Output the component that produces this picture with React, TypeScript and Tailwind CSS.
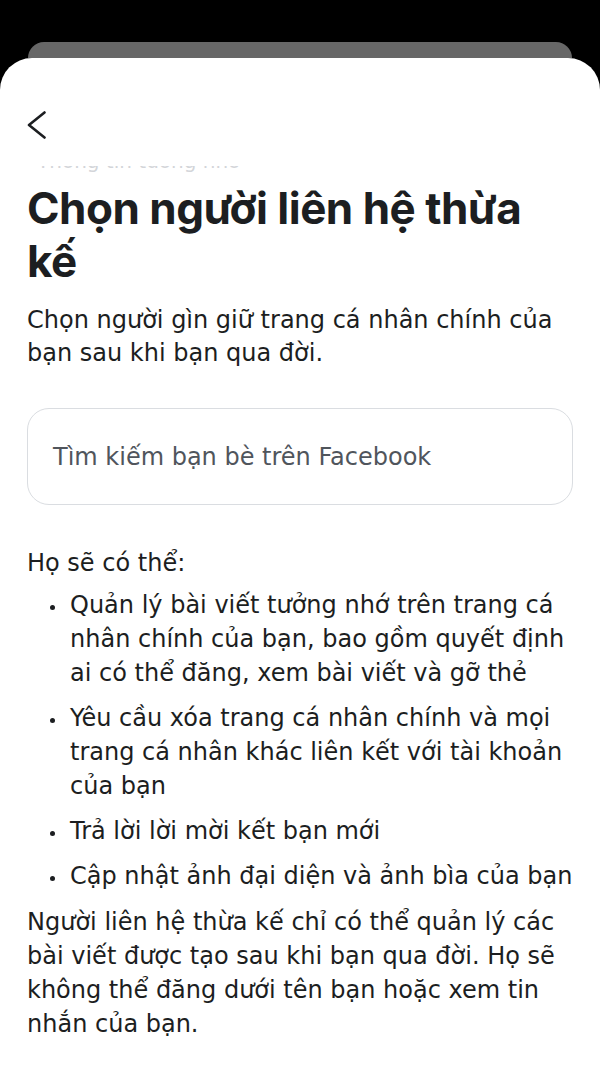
const rights = [
  "Quản lý bài viết tưởng nhớ trên trang cá nhân chính của bạn, bao gồm quyết định ai có thể đăng, xem bài viết và gỡ thẻ",
  "Yêu cầu xóa trang cá nhân chính và mọi trang cá nhân khác liên kết với tài khoản của bạn",
  "Trả lời lời mời kết bạn mới",
  "Cập nhật ảnh đại diện và ảnh bìa của bạn",
];

export default function App() {
  return (
    <div
      className="min-h-screen bg-black"
      style={{ fontFamily: "'DejaVu Sans', 'Noto Sans', sans-serif" }}
    >
      {/* sheet stacked behind */}
      <div className="pt-[42px]">
        <div className="mx-[28px] h-[16px] rounded-t-[24px] bg-[#676767]" />
      </div>

      <div className="min-h-[1009px] rounded-t-[32px] bg-white pl-[27px] pr-[24px] text-[#1c1e21]">
        <div className="pt-[53px]">
          <svg width="22" height="28" viewBox="0 0 22 28" fill="none" className="-ml-[1px]">
            <polyline
              points="18.5,1.5 3,14 18.5,26.5"
              stroke="#1c1e21"
              strokeWidth="2.6"
              strokeLinecap="round"
              strokeLinejoin="round"
            />
          </svg>
        </div>

        {/* previous heading scrolled under the top bar */}
        <div className="mt-[27px] h-[8px] overflow-hidden">
          <p className="-mt-[18px] pl-[10px] text-[20px] leading-[26px] text-[#d3d5d9]">
            Thông tin tưởng nhớ
          </p>
        </div>

        <h1
          className="mt-[8px] max-w-[530px] text-[44px] font-bold leading-[53px] tracking-[-0.5px] text-[#1c1e21]"
          style={{ fontFamily: "Inter, sans-serif" }}
        >
          Chọn người liên hệ thừa kế
        </h1>

        <p className="mt-[16px] text-[24px] leading-[33px]">
          Chọn người gìn giữ trang cá nhân chính của bạn sau khi bạn qua đời.
        </p>

        <div className="mr-[3px] mt-[38px] flex h-[97px] items-center rounded-[22px] border border-[#dadde1] px-[25px]">
          <span className="text-[24px] text-[#50555c]">Tìm kiếm bạn bè trên Facebook</span>
        </div>

        <p className="mt-[41px] text-[24px] leading-[34px]">Họ sẽ có thể:</p>

        <ul className="mt-[8px] flex flex-col gap-[11px]">
          {rights.map((r) => (
            <li key={r} className="flex text-[24px] leading-[34px]">
              <span className="flex h-[34px] w-[43px] shrink-0 items-center pl-[23px]">
                <span className="mt-[4px] h-[5px] w-[5px] rounded-full bg-[#1c1e21]" />
              </span>
              <span>{r}</span>
            </li>
          ))}
        </ul>

        <p className="mt-[12px] text-[24px] leading-[34px]">
          Người liên hệ thừa kế chỉ có thể quản lý các bài viết được tạo sau khi bạn qua đời. Họ sẽ
          không thể đăng dưới tên bạn hoặc xem tin nhắn của bạn.
        </p>
      </div>
    </div>
  );
}
